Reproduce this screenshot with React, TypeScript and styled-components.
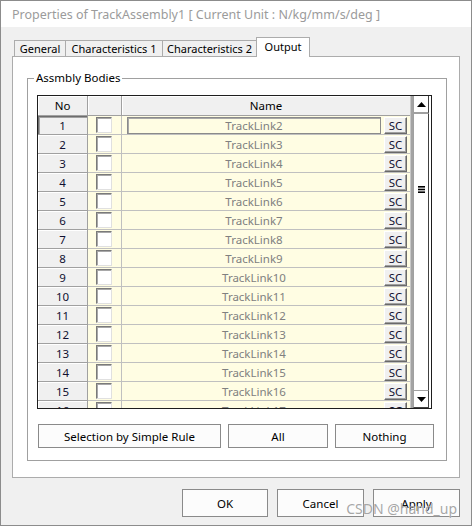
import React from "react";
import styled, { createGlobalStyle } from "styled-components";

const uiFont = `"Noto Sans", "Open Sans", "Liberation Sans", sans-serif`;
const yellow = "#fffde3";

const GlobalStyle = createGlobalStyle`
  html, body { margin: 0; padding: 0; background: #fff; }
  * { box-sizing: border-box; }
`;

const Window = styled.div`
  position: relative;
  width: 472px;
  height: 526px;
  border: 1px solid #8c8c8c;
  background: #f0f0f0;
  display: flex;
  flex-direction: column;
  font-family: ${uiFont};
  color: #000;
`;

const TitleBar = styled.div`
  height: 26px;
  background: #fff;
  color: #9b9b9b;
  font-size: 12.5px;
  padding-left: 11px;
  display: flex;
  align-items: center;
  white-space: nowrap;
`;

const Body = styled.div`
  flex: 1;
  padding: 10px 11px 0 11px;
  display: flex;
  flex-direction: column;
`;

const TabStrip = styled.div`
  display: flex;
  align-items: flex-end;
  height: 20px;
  padding-left: 2px;
  margin-bottom: -1px;
`;

const Tab = styled.div<{ $w: number; $active?: boolean }>`
  position: relative;
  width: ${p => p.$w}px;
  height: ${p => (p.$active ? 20 : 17)}px;
  margin-left: -1px;
  border: 1px solid #acacac;
  border-bottom: ${p => (p.$active ? "none" : "1px solid #acacac")};
  background: ${p => (p.$active ? "#fff" : "#f0f0f0")};
  z-index: ${p => (p.$active ? 2 : 0)};
  font-size: 11px;
  display: flex;
  justify-content: center;
  align-items: ${p => (p.$active ? "flex-start" : "center")};
  padding-top: ${p => (p.$active ? 1 : 0)}px;
  white-space: nowrap;
  &:first-child { margin-left: 0; }
`;

const Panel = styled.div`
  position: relative;
  z-index: 1;
  width: 448px;
  height: 422px;
  border: 1px solid #acacac;
  background: #fff;
  padding: 13px 13px 16px 14px;
`;

const Group = styled.fieldset`
  margin: 0;
  width: 419px;
  height: 391px;
  border: 1px solid #a0a0a0;
  padding: 9px 12px 12px 9px;
  display: flex;
  flex-direction: column;
`;

const Legend = styled.legend`
  font-size: 11.5px;
  line-height: 16px;
  padding: 0 2px;
  margin-left: -3px;
`;

const Grid = styled.div`
  width: 395px;
  height: 314px;
  border: 1px solid #1e1e1e;
  display: flex;
  background: #fff;
`;

const DataArea = styled.div`
  width: 372px;
  display: flex;
  flex-direction: column;
`;

const HeaderRow = styled.div`
  display: flex;
  height: 20px;
  background: #f0f0f0;
`;

const HeadCell = styled.div<{ $w?: number }>`
  ${p => (p.$w ? `width: ${p.$w}px;` : "flex: 1;")}
  height: 20px;
  border-right: 1px solid #a0a0a0;
  border-bottom: 1px solid #a0a0a0;
  box-shadow: inset 1px 1px #fff;
  font-size: 11.5px;
  display: flex;
  align-items: center;
  justify-content: center;
  &:last-child { border-right: none; }
`;

const Rows = styled.div`
  height: 292px;
  overflow: hidden;
`;

const Row = styled.div`
  display: flex;
  height: 19px;
`;

const NoCell = styled.div<{ $active?: boolean }>`
  width: 50px;
  background: #f0f0f0;
  border-right: 1px solid #a0a0a0;
  border-bottom: 1px solid #a0a0a0;
  box-shadow: ${p =>
    p.$active ? "inset 1px 1px #6d6d6d, inset 2px 2px #a0a0a0" : "inset 1px 1px #fff"};
  font-size: 11.5px;
  color: #101030;
  display: flex;
  align-items: center;
  justify-content: center;
`;

const CheckCell = styled.div`
  width: 34px;
  background: ${yellow};
  border-right: 1px solid #c0c0c0;
  border-bottom: 1px solid #c0c0c0;
  padding-left: 8px;
  display: flex;
  align-items: center;
`;

const CheckBox = styled.div`
  width: 16px;
  height: 16px;
  background: #fff;
  border: 1px solid;
  border-color: #7a7a7a #e0e0e0 #e0e0e0 #7a7a7a;
  box-shadow: inset 1px 1px #a8a8a8;
`;

const NameCell = styled.div`
  flex: 1;
  background: ${yellow};
  border-bottom: 1px solid #c0c0c0;
  padding-left: 5px;
  display: flex;
  align-items: center;
`;

const NameField = styled.div<{ $focused?: boolean }>`
  width: 254px;
  height: 17px;
  border: 1px solid ${p => (p.$focused ? "#8a8a8a" : "transparent")};
  box-shadow: ${p => (p.$focused ? "inset 1px 1px #a8a8a8" : "none")};
  color: #808080;
  font-size: 11.5px;
  display: flex;
  align-items: center;
  justify-content: center;
`;

const ScButton = styled.div`
  margin-left: 3px;
  width: 23px;
  height: 17px;
  background: #f0f0f0;
  border: 1px solid;
  border-color: #fff #696969 #696969 #fff;
  box-shadow: inset -1px -1px #a0a0a0;
  font-size: 11.5px;
  color: #101030;
  display: flex;
  align-items: center;
  justify-content: center;
`;

const Divider = styled.div`
  width: 3px;
  background: #a3a3a3;
  border-left: 1px solid #c8c8c8;
`;

const ScrollWrap = styled.div`
  width: 18px;
  padding-right: 2px;
  background: #fff;
  display: flex;
`;

const ScrollBox = styled.div`
  flex: 1;
  border-left: 1px solid #a0a0a0;
  display: flex;
  flex-direction: column;
`;

const ArrowButton = styled.div<{ $down?: boolean }>`
  height: 18px;
  display: flex;
  align-items: center;
  justify-content: center;
  ${p =>
    p.$down
      ? "border: 1px solid; border-color: #a0a0a0 #404040 #404040 #a0a0a0; margin-left: -1px;"
      : "border-bottom: 2px solid #a0a0a0; border-right: 1px solid #404040;"}
`;

const Track = styled.div`
  flex: 1;
  display: flex;
  flex-direction: column;
  align-items: center;
  padding-top: 72px;
  border-right: 1px solid #404040;
`;

const ButtonRow = styled.div`
  display: flex;
  margin-top: 15px;
  padding-left: 1px;
  gap: 7px;
`;

const PushButton = styled.button<{ $w: number; $h?: number }>`
  width: ${p => p.$w}px;
  height: ${p => p.$h ?? 24}px;
  margin: 0;
  padding: 0;
  background: #fcfcfc;
  border: 1px solid #8a8a8a;
  font-family: ${uiFont};
  font-size: 11.5px;
  color: #000;
`;

const Footer = styled.div`
  display: flex;
  justify-content: flex-end;
  gap: 9px;
  margin-top: 11px;
`;

const Highlight = styled.div`
  position: absolute;
  left: 23px;
  top: 411px;
  width: 204px;
  height: 50px;
  border: 3px solid #ff1f1f;
  border-radius: 3px;
  pointer-events: none;
`;

const Watermark = styled.div`
  position: absolute;
  right: 14px;
  top: 500px;
  font-family: ${uiFont};
  font-size: 14px;
  line-height: 16px;
  color: rgba(150, 150, 150, 0.85);
  text-shadow: 0 0 1px #fff;
  pointer-events: none;
`;

const UpArrow = () => (
  <svg width="9" height="5" viewBox="0 0 9 5">
    <polygon points="0,5 9,5 4.5,0" fill="#000" />
  </svg>
);

const DownArrow = () => (
  <svg width="9" height="5" viewBox="0 0 9 5">
    <polygon points="0,0 9,0 4.5,5" fill="#000" />
  </svg>
);

const Thumb = () => (
  <svg width="7" height="7" viewBox="0 0 7 7">
    <rect x="0" y="0" width="7" height="1.6" fill="#000" />
    <rect x="0" y="2.7" width="7" height="1.6" fill="#000" />
    <rect x="0" y="5.4" width="7" height="1.6" fill="#000" />
  </svg>
);

const rows = Array.from({ length: 16 }, (_, i) => ({ no: i + 1, name: `TrackLink${i + 2}` }));

export default function App() {
  return (
    <>
      <GlobalStyle />
      <Window>
        <TitleBar>Properties of TrackAssembly1 [ Current Unit : N/kg/mm/s/deg ]</TitleBar>
        <Body>
          <TabStrip>
            <Tab $w={52}>General</Tab>
            <Tab $w={98}>Characteristics 1</Tab>
            <Tab $w={95}>Characteristics 2</Tab>
            <Tab $w={54} $active>Output</Tab>
          </TabStrip>
          <Panel>
            <Group>
              <Legend>Assmbly Bodies</Legend>
              <Grid>
                <DataArea>
                  <HeaderRow>
                    <HeadCell $w={50}>No</HeadCell>
                    <HeadCell $w={34} />
                    <HeadCell>Name</HeadCell>
                  </HeaderRow>
                  <Rows>
                    {rows.map(r => (
                      <Row key={r.no}>
                        <NoCell $active={r.no === 1}>{r.no}</NoCell>
                        <CheckCell>
                          <CheckBox />
                        </CheckCell>
                        <NameCell>
                          <NameField $focused={r.no === 1}>{r.name}</NameField>
                          <ScButton>SC</ScButton>
                        </NameCell>
                      </Row>
                    ))}
                  </Rows>
                </DataArea>
                <Divider />
                <ScrollWrap>
                  <ScrollBox>
                    <ArrowButton>
                      <UpArrow />
                    </ArrowButton>
                    <Track>
                      <Thumb />
                    </Track>
                    <ArrowButton $down>
                      <DownArrow />
                    </ArrowButton>
                  </ScrollBox>
                </ScrollWrap>
              </Grid>
              <ButtonRow>
                <PushButton $w={183}>Selection by Simple Rule</PushButton>
                <PushButton $w={100}>All</PushButton>
                <PushButton $w={99}>Nothing</PushButton>
              </ButtonRow>
            </Group>
          </Panel>
          <Footer>
            <PushButton $w={86} $h={28}>OK</PushButton>
            <PushButton $w={87} $h={28}>Cancel</PushButton>
            <PushButton $w={87} $h={28}>Apply</PushButton>
          </Footer>
        </Body>
        <Highlight />
        <Watermark>CSDN @hand_up</Watermark>
      </Window>
    </>
  );
}
